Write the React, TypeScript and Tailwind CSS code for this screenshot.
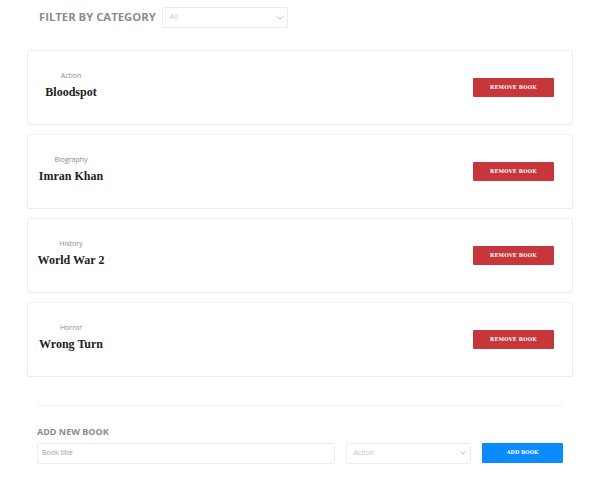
import React from "react";

interface Book {
    category: string;
    title: string;
}

const books: Book[] = [
    { category: "Action", title: "Bloodspot" },
    { category: "Biography", title: "Imran Khan" },
    { category: "History", title: "World War 2" },
    { category: "Horror", title: "Wrong Turn" },
];

const sans = "font-['Open_Sans',sans-serif]";
const slab = "font-['Liberation_Serif',serif]";

function Chevron() {
    return (
        <svg width="6" height="4" viewBox="0 0 6 4" className="text-[#b5b5b5]">
            <path d="M0.5 0.5 L3 3 L5.5 0.5" fill="none" stroke="currentColor" strokeWidth="0.9" />
        </svg>
    );
}

export default function App() {
    return (
        <div className={`w-[600px] h-[500px] bg-white px-[27px] pt-[7px] ${sans}`}>
            {/* filter */}
            <div className="flex items-center pl-[12px] gap-[6px]">
                <div className="text-[11.3px] font-bold text-[#8c8c8c]">FILTER BY CATEGORY</div>
                <div className="w-[126px] h-[21px] border border-[#ececec] rounded-[2px] flex items-center justify-between pl-[7px] pr-[4px]">
                    <span className="text-[7px] text-[#c4c4c4]">All</span>
                    <Chevron />
                </div>
            </div>

            {/* books */}
            <div className="mt-[22px] flex flex-col gap-[9px]">
                {books.map((book, index) => (
                    <div key={index} className="h-[75px] border border-[#ededed] rounded-[2px] flex items-center justify-between pl-[14px] pr-[18px]">
                        <div className="w-[58px] flex flex-col items-center mb-[6px]">
                            <div className="text-[7px] text-[#8a8a8a] leading-[10px]">{book.category}</div>
                            <div className={`${slab} text-[12px] font-bold text-[#222] mt-[5px] whitespace-nowrap leading-[13px]`}>{book.title}</div>
                        </div>
                        <button className="w-[81px] h-[19px] bg-[#c7363a] text-white text-[5px] font-bold font-['DejaVu_Serif',serif] tracking-[0.2px] rounded-[1px]">
                            REMOVE BOOK
                        </button>
                    </div>
                ))}
            </div>

            {/* add new book */}
            <div className="mx-[10px] mt-[28px] border-t border-[#f0f0f0] pt-[19px]">
                <div className="text-[9px] font-bold text-[#8c8c8c]">ADD NEW BOOK</div>
                <div className="flex items-center mt-[4px]">
                    <div className="w-[299px] h-[21px] border border-[#ededed] rounded-[2px] flex items-center pl-[4px]">
                        <span className="text-[7px] text-[#a0a0a0]">Book title</span>
                    </div>
                    <div className="ml-[11px] w-[125px] h-[21px] border border-[#ededed] rounded-[2px] flex items-center justify-between pl-[6px] pr-[4px]">
                        <span className="text-[7px] text-[#c4c4c4]">Action</span>
                        <Chevron />
                    </div>
                    <button className="ml-[11px] w-[81px] h-[20px] bg-[#0a8cff] text-white text-[5px] font-bold font-['DejaVu_Serif',serif] rounded-[1px]">
                        ADD BOOK
                    </button>
                </div>
            </div>
        </div>
    );
}
